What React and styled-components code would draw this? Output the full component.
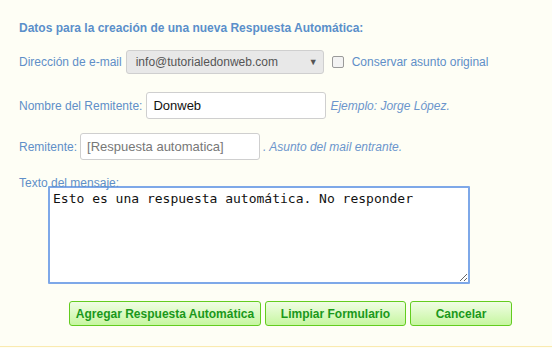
import React from "react";
import styled, { createGlobalStyle } from "styled-components";

const GlobalStyle = createGlobalStyle`
  html, body {
    margin: 0;
    padding: 0;
    background: #fefef5;
  }
  body {
    font-family: "Liberation Sans", Arial, sans-serif;
  }
`;

const Page = styled.div`
  width: 552px;
  height: 347px;
  box-sizing: border-box;
  padding: 20px 0 0 19px;
  border-bottom: 1px solid #faeab0;
  background: #fefef5;
`;

const Title = styled.h3`
  margin: 0;
  font-size: 12px;
  font-weight: bold;
  color: #5a8fca;
  line-height: 16px;
`;

const Row = styled.div`
  display: flex;
  align-items: center;
  gap: ${({ gap }) => gap || 4}px;
  margin-top: ${({ top }) => top}px;
  height: ${({ h }) => h}px;
`;

const Label = styled.label`
  font-size: 12px;
  color: #5f8fc8;
  white-space: nowrap;
`;

const Hint = styled.span`
  font-size: 12px;
  font-style: italic;
  color: #6b95cc;
  white-space: nowrap;
`;

const Select = styled.div`
  width: 198px;
  height: 24px;
  box-sizing: border-box;
  display: flex;
  align-items: center;
  justify-content: space-between;
  padding: 0 5px 0 9px;
  background: #e8e8e8;
  border: 1px solid #cfcfcf;
  border-radius: 3px;
  font-size: 12px;
  color: #555;
`;

const Arrow = styled.span`
  font-size: 9px;
  color: #555;
`;

const Check = styled.input`
  width: 12px;
  height: 12px;
  margin: 0 4px 0 4px;
  appearance: none;
  border: 1px solid #9a9a9a;
  border-radius: 2px;
  background: #f3f3f3;
`;

const Input = styled.input`
  width: ${({ w }) => w}px;
  height: 27px;
  box-sizing: border-box;
  padding: 0 6px;
  border: 1px solid #cfcfcf;
  border-radius: 3px;
  background: #fff;
  font-family: "Liberation Sans", Arial, sans-serif;
  font-size: 13px;
  color: #111;
  outline: none;
  &::placeholder {
    color: #777;
  }
`;

const MessageLabel = styled(Label)`
  display: block;
  margin-top: 16px;
  line-height: 14px;
`;

const Textarea = styled.textarea`
  display: block;
  width: 422px;
  height: 98px;
  box-sizing: border-box;
  margin: -4px 0 0 29px;
  padding: 3px 3px;
  border: 2px solid #7ea8e8;
  border-radius: 1px;
  background: #fff;
  font-family: "DejaVu Sans Mono", monospace;
  font-size: 13px;
  line-height: 16px;
  color: #111;
  resize: both;
  outline: none;
`;

const Buttons = styled.div`
  display: flex;
  gap: 4px;
  margin: 17px 0 0 50px;
`;

const Button = styled.button`
  width: ${({ w }) => w}px;
  height: 25px;
  box-sizing: border-box;
  padding: 0;
  border: 1px solid #63cc1f;
  border-radius: 3px;
  background: linear-gradient(#f0fde4, #c6f6a0);
  font-family: "Liberation Sans", Arial, sans-serif;
  font-size: 12px;
  font-weight: bold;
  color: #1a981a;
  cursor: pointer;
`;

const App = () => {
  return (
    <>
      <GlobalStyle />
      <Page>
        <Title>Datos para la creación de una nueva Respuesta Automática:</Title>
        <Row top={14} h={24}>
          <Label>Dirección de e-mail</Label>
          <Select>
            info@tutorialedonweb.com
            <Arrow>▼</Arrow>
          </Select>
          <Check type="checkbox" />
          <Label>Conservar asunto original</Label>
        </Row>
        <Row top={18} h={27}>
          <Label>Nombre del Remitente:</Label>
          <Input w={180} defaultValue="Donweb" />
          <Hint>Ejemplo: Jorge López.</Hint>
        </Row>
        <Row top={14} h={27} gap={3}>
          <Label>Remitente:</Label>
          <Input w={180} placeholder="[Respuesta automatica]" />
          <Hint>. Asunto del mail entrante.</Hint>
        </Row>
        <MessageLabel>Texto del mensaje:</MessageLabel>
        <Textarea defaultValue="Esto es una respuesta automática. No responder" />
        <Buttons>
          <Button w={192}>Agregar Respuesta Automática</Button>
          <Button w={141}>Limpiar Formulario</Button>
          <Button w={102}>Cancelar</Button>
        </Buttons>
      </Page>
    </>
  );
};

export default App;
